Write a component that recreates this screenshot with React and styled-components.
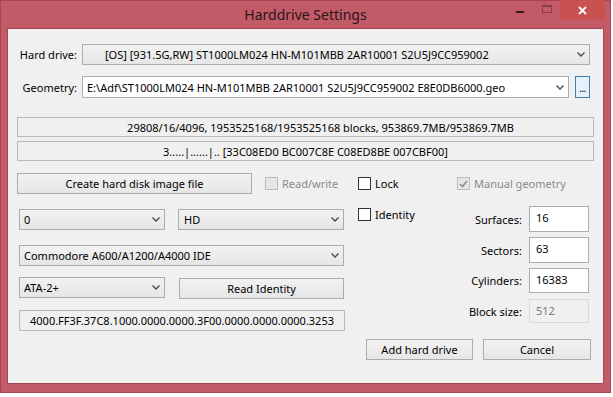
import React from "react";
import styled, { createGlobalStyle } from "styled-components";

const GlobalStyle = createGlobalStyle`
  html, body { margin: 0; padding: 0; background: #ffffff; }
  body {
    font-family: "Noto Sans", "Open Sans", "Liberation Sans", sans-serif;
    font-size: 11px;
    color: #000;
  }
  * { box-sizing: border-box; }
`;

const Window = styled.div`
  width: 611px;
  height: 393px;
  background: #c25a67;
  box-shadow: inset 0 0 0 1px #a84350;
  display: flex;
  flex-direction: column;
`;

const TitleBar = styled.div`
  height: 29px;
  display: grid;
  grid-template-columns: 1fr auto 1fr;
  align-items: start;
`;

const Title = styled.div`
  grid-column: 2;
  height: 29px;
  line-height: 29px;
  font-size: 14px;
  color: #2a1519;
`;

const Caption = styled.div`
  grid-column: 3;
  justify-self: end;
  display: flex;
  align-items: flex-start;
  margin-right: 6px;
`;

const CapBtn = styled.div`
  width: ${(p) => p.$w}px;
  height: 20px;
  display: flex;
  align-items: ${(p) => (p.$top ? "flex-start" : "center")};
  justify-content: center;
  background: ${(p) => p.$bg || "transparent"};
`;

const MinGlyph = styled.span`
  width: 8px;
  height: 2px;
  margin-top: 11px;
  background: #3a1d22;
`;

const MaxGlyph = styled.span`
  width: 10px;
  height: 8px;
  margin-top: 5px;
  border: 1px solid rgba(70, 30, 36, 0.45);
  border-top-width: 2px;
`;

const Client = styled.div`
  margin: 0 8px 10px 8px;
  flex: 1;
  background: #f0f0f0;
  box-shadow: 0 0 0 1px rgba(120, 40, 50, 0.35);
  padding-top: 15px;
`;

const TopForm = styled.div`
  display: grid;
  grid-template-columns: 60px 1fr;
  column-gap: 5px;
  row-gap: 11px;
  padding: 0 13px 0 9px;
  align-items: center;
`;

const FieldLabel = styled.div`
  text-align: right;
  white-space: nowrap;
`;

const GeoRow = styled.div`
  display: flex;
  gap: 6px;
  align-items: flex-start;
`;

const Combo = styled.div`
  width: ${(p) => (p.$w ? `${p.$w}px` : "100%")};
  flex: ${(p) => (p.$w ? "none" : "1")};
  height: ${(p) => p.$h || 21}px;
  margin-left: ${(p) => p.$ml || 0}px;
  border: 1px solid ${(p) => (p.$edit ? "#abadb3" : "#acacac")};
  background: ${(p) => (p.$edit ? "#ffffff" : "linear-gradient(#f2f2f2, #e6e6e6)")};
  display: flex;
  align-items: center;
  padding-left: ${(p) => p.$pl ?? 4}px;
  padding-right: 4px;
  white-space: nowrap;
  overflow: hidden;
`;

const ComboText = styled.span`
  flex: 1;
  overflow: hidden;
`;

const Arrow = () => (
  <svg width="8" height="5" viewBox="0 0 8 5" style={{ flex: "none" }}>
    <polyline points="0.5,0.5 4,4 7.5,0.5" fill="none" stroke="#4a4a4a" strokeWidth="1.4" />
  </svg>
);

const DotsBtn = styled.div`
  width: 15px;
  height: 22px;
  border: 1px solid #3c7fb1;
  background: #e5f1fb;
  display: flex;
  align-items: flex-end;
  justify-content: center;
  font-size: 10px;
  line-height: 12px;
  padding-bottom: 3px;
  letter-spacing: -0.5px;
`;

const InfoBox = styled.div`
  margin: ${(p) => p.$mt}px 9px 0 9px;
  height: 20px;
  border: 1px solid #b9b9b9;
  background: #f0f0f0;
  display: flex;
  align-items: center;
  justify-content: center;
  padding-left: ${(p) => p.$shift || 0}px;
  white-space: nowrap;
`;

const Lower = styled.div`
  margin-top: 12px;
  padding-left: 9px;
  display: flex;
  align-items: flex-start;
`;

const LeftCol = styled.div`
  width: 328px;
  display: flex;
  flex-direction: column;
`;

const Row = styled.div`
  display: flex;
  align-items: ${(p) => p.$align || "center"};
  height: ${(p) => p.$h || 21}px;
  margin-top: ${(p) => p.$mt || 0}px;
  padding-left: ${(p) => p.$pl || 0}px;
`;

const Button = styled.div`
  width: ${(p) => p.$w}px;
  height: 21px;
  margin-left: ${(p) => p.$ml || 0}px;
  margin-top: ${(p) => p.$mt || 0}px;
  border: 1px solid #acacac;
  background: linear-gradient(#f2f2f2, #e6e6e6);
  display: flex;
  align-items: center;
  justify-content: center;
  white-space: nowrap;
`;

const Check = styled.label`
  display: flex;
  align-items: center;
  gap: 4px;
  margin-left: ${(p) => p.$ml || 0}px;
  color: ${(p) => (p.$disabled ? "#8a8a8a" : "#000")};
  white-space: nowrap;
`;

const Box = styled.span`
  width: 13px;
  height: 13px;
  flex: none;
  border: 1px solid ${(p) => (p.$disabled ? "#bcbcbc" : "#333333")};
  background: ${(p) => (p.$disabled ? "#e6e6e6" : "#ffffff")};
  display: flex;
  align-items: center;
  justify-content: center;
`;

const CheckBox = ({ label, checked, disabled, ml }) => (
  <Check $disabled={disabled} $ml={ml}>
    <Box $disabled={disabled}>
      {checked && (
        <svg width="9" height="8" viewBox="0 0 9 8">
          <polyline points="1,4 3.5,6.5 8,1" fill="none" stroke={disabled ? "#8c8c8c" : "#222"} strokeWidth="1.6" />
        </svg>
      )}
    </Box>
    {label}
  </Check>
);

const TextBox = styled.div`
  width: ${(p) => p.$w}px;
  height: ${(p) => p.$h || 21}px;
  border: 1px solid ${(p) => (p.$disabled ? "#d9d9d9" : p.$ro ? "#b9b9b9" : "#abadb3")};
  background: ${(p) => (p.$ro || p.$disabled ? "#f0f0f0" : "#ffffff")};
  color: ${(p) => (p.$disabled ? "#7a7a7a" : "#000")};
  display: flex;
  align-items: ${(p) => (p.$center ? "center" : "flex-start")};
  justify-content: ${(p) => (p.$center ? "center" : "flex-start")};
  padding: ${(p) => (p.$center ? "0" : "3px 0 0 6px")};
  white-space: nowrap;
`;

const RightPart = styled.div`
  margin-left: 13px;
  display: flex;
  flex-direction: column;
`;

const RightTop = styled.div`
  display: flex;
  align-items: flex-start;
`;

const MidCol = styled.div`
  width: 99px;
  display: flex;
  flex-direction: column;
`;

const GeoCol = styled.div`
  display: flex;
  flex-direction: column;
`;

const FormRow = styled.div`
  display: grid;
  grid-template-columns: 65px 60px;
  column-gap: 7px;
  align-items: center;
  margin-top: ${(p) => p.$mt}px;
  height: ${(p) => p.$h}px;
`;

const ActionRow = styled.div`
  display: flex;
  margin-top: 16px;
  margin-left: 8px;
  gap: 10px;
`;

export default function App() {
  return (
    <>
      <GlobalStyle />
      <Window>
        <TitleBar>
          <Title>Harddrive Settings</Title>
          <Caption>
            <CapBtn $w={26} $top>
              <MinGlyph />
            </CapBtn>
            <CapBtn $w={27} $top>
              <MaxGlyph />
            </CapBtn>
            <CapBtn $w={45} $bg="#c9514f">
              <svg width="9" height="9" viewBox="0 0 9 9">
                <path d="M1 1 L8 8 M8 1 L1 8" stroke="#ffffff" strokeWidth="1.8" />
              </svg>
            </CapBtn>
          </Caption>
        </TitleBar>
        <Client>
          <TopForm>
            <FieldLabel>Hard drive:</FieldLabel>
            <Combo $pl={22}>
              <ComboText>[OS] [931.5G,RW] ST1000LM024 HN-M101MBB 2AR10001 S2U5J9CC959002</ComboText>
              <Arrow />
            </Combo>
            <FieldLabel>Geometry:</FieldLabel>
            <GeoRow>
              <Combo $edit $h={22} $pl={4}>
                <ComboText>E:\Adf\ST1000LM024 HN-M101MBB 2AR10001 S2U5J9CC959002 E8E0DB6000.geo</ComboText>
                <Arrow />
              </Combo>
              <DotsBtn>...</DotsBtn>
            </GeoRow>
          </TopForm>
          <InfoBox $mt={19} $shift={30}>
            29808/16/4096, 1953525168/1953525168 blocks, 953869.7MB/953869.7MB
          </InfoBox>
          <InfoBox $mt={4}>3.....|......|.. [33C08ED0 BC007C8E C08ED8BE 007CBF00]</InfoBox>
          <Lower>
            <LeftCol>
              <Row>
                <Button $w={235}>Create hard disk image file</Button>
                <CheckBox label="Read/write" disabled ml={13} />
              </Row>
              <Row $mt={15} $pl={2}>
                <Combo $w={146}>
                  <ComboText>0</ComboText>
                  <Arrow />
                </Combo>
                <Combo $w={166} $ml={13} $pl={5}>
                  <ComboText>HD</ComboText>
                  <Arrow />
                </Combo>
              </Row>
              <Row $mt={15} $pl={2}>
                <Combo $w={325}>
                  <ComboText>Commodore A600/A1200/A4000 IDE</ComboText>
                  <Arrow />
                </Combo>
              </Row>
              <Row $mt={11} $pl={2} $align="flex-start">
                <Combo $w={146}>
                  <ComboText>ATA-2+</ComboText>
                  <Arrow />
                </Combo>
                <Button $w={165} $ml={14} $mt={1}>Read Identity</Button>
              </Row>
              <Row $mt={12} $pl={2}>
                <TextBox $w={326} $ro $center>
                  4000.FF3F.37C8.1000.0000.0000.3F00.0000.0000.0000.3253
                </TextBox>
              </Row>
            </LeftCol>
            <RightPart>
              <RightTop>
                <MidCol>
                  <Row>
                    <CheckBox label="Lock" />
                  </Row>
                  <Row $mt={10}>
                    <CheckBox label="Identity" />
                  </Row>
                </MidCol>
                <GeoCol>
                  <Row>
                    <CheckBox label="Manual geometry" checked disabled />
                  </Row>
                  <FormRow $mt={12} $h={26}>
                    <FieldLabel>Surfaces:</FieldLabel>
                    <TextBox $w={60} $h={26}>16</TextBox>
                  </FormRow>
                  <FormRow $mt={5} $h={26}>
                    <FieldLabel>Sectors:</FieldLabel>
                    <TextBox $w={60} $h={26}>63</TextBox>
                  </FormRow>
                  <FormRow $mt={5} $h={25}>
                    <FieldLabel>Cylinders:</FieldLabel>
                    <TextBox $w={60} $h={25}>16383</TextBox>
                  </FormRow>
                  <FormRow $mt={6} $h={24}>
                    <FieldLabel>Block size:</FieldLabel>
                    <TextBox $w={60} $h={24} $disabled>512</TextBox>
                  </FormRow>
                </GeoCol>
              </RightTop>
              <ActionRow>
                <Button $w={107}>Add hard drive</Button>
                <Button $w={108}>Cancel</Button>
              </ActionRow>
            </RightPart>
          </Lower>
        </Client>
      </Window>
    </>
  );
}
